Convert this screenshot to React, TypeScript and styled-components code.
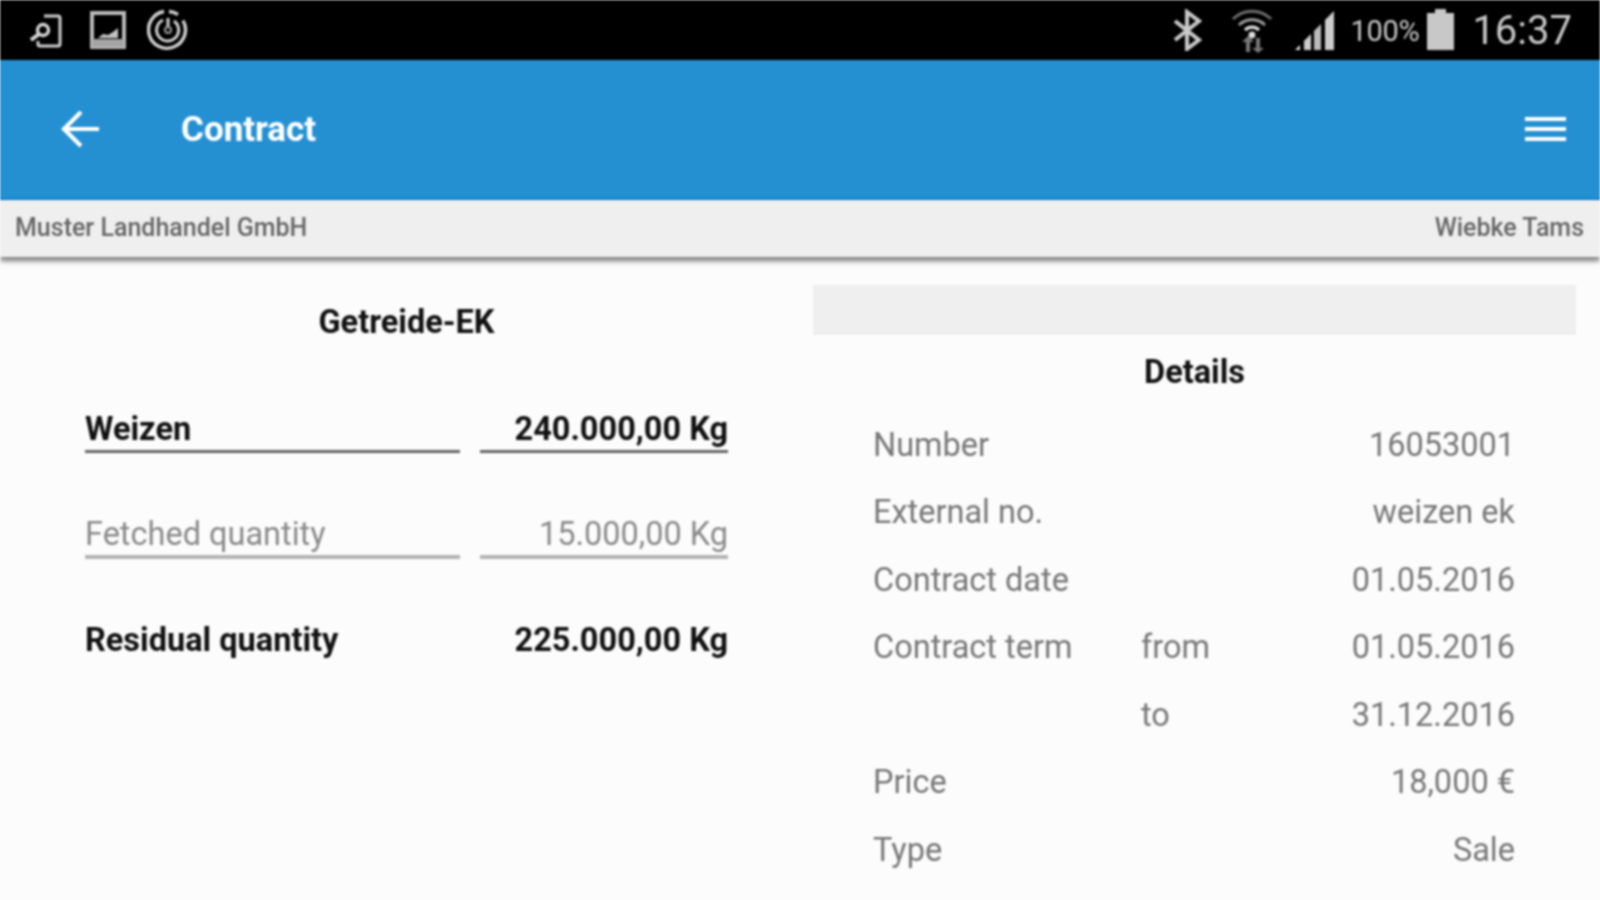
import React from "react";
import styled, { createGlobalStyle } from "styled-components";

const GlobalStyle = createGlobalStyle`
  html, body {
    margin: 0;
    padding: 0;
    background: #fcfcfc;
    overflow: hidden;
  }
  body {
    font-family: Roboto, "Liberation Sans", sans-serif;
  }
`;

const details = [
  { label: "Number", extra: "", value: "16053001" },
  { label: "External no.", extra: "", value: "weizen ek" },
  { label: "Contract date", extra: "", value: "01.05.2016" },
  { label: "Contract term", extra: "from", value: "01.05.2016" },
  { label: "", extra: "to", value: "31.12.2016" },
  { label: "Price", extra: "", value: "18,000 €" },
  { label: "Type", extra: "", value: "Sale" },
];

const App = () => {
  return (
    <Page>
      <GlobalStyle />
      <StatusBar>
        <StatusGroup>
          <StatusIcon $left={28} width="40" height="40" viewBox="0 0 40 40">
            <path d="M16 6h14a2 2 0 0 1 2 2v26a2 2 0 0 1-2 2H12a2 2 0 0 1-2-2v-3" fill="none" stroke="#cfcfcf" strokeWidth="3" />
            <circle cx="15" cy="20" r="5.5" fill="none" stroke="#d8d8d8" strokeWidth="3.4" />
            <path d="M11 24l-8 6" stroke="#d8d8d8" strokeWidth="4" />
          </StatusIcon>
          <StatusIcon $left={20} width="40" height="40" viewBox="0 0 40 40">
            <rect x="4" y="3" width="32" height="34" fill="none" stroke="#c0c0c0" strokeWidth="3.8" />
            <path d="M10 28l5-4 5 1 5-3 5-4v10z" fill="#c4c4c4" />
            <rect x="4" y="29" width="32" height="8" fill="#a4a4a4" />
          </StatusIcon>
          <StatusIcon $left={19} width="42" height="42" viewBox="0 0 42 42">
            <path d="M17 2.5a18.5 18.5 0 1 0 19 9" fill="none" stroke="#cfcfcf" strokeWidth="3.4" />
            <path d="M22 2.5a18.5 18.5 0 0 1 9 3" fill="none" stroke="#cfcfcf" strokeWidth="3.4" />
            <path d="M16 11a11 11 0 1 0 11 1" fill="none" stroke="#cfcfcf" strokeWidth="3" />
            <path d="M21 9v10" stroke="#cfcfcf" strokeWidth="3" />
            <circle cx="21" cy="21" r="3" fill="none" stroke="#999" strokeWidth="2" />
          </StatusIcon>
        </StatusGroup>
        <StatusGroup>
          <StatusIcon $left={0} width="32" height="42" viewBox="0 0 32 42">
            <path d="M4 12l24 19-12 9V3l12 9L4 31" fill="none" stroke="#c8c8c8" strokeWidth="4" />
          </StatusIcon>
          <StatusIcon $left={27} width="44" height="46" viewBox="0 0 44 46">
            <path d="M3 12a27 27 0 0 1 38 0" fill="none" stroke="#6c6c6c" strokeWidth="3" />
            <path d="M9 18a19 19 0 0 1 26 0" fill="none" stroke="#9a9a9a" strokeWidth="3" />
            <path d="M15 23a10 10 0 0 1 14 0" fill="none" stroke="#ddd" strokeWidth="3.4" />
            <circle cx="22" cy="28" r="3.4" fill="#ddd" />
            <path d="M16 45v-10h-4l6-6 6 6h-4v10zM26 31v10h-4l6 5 6-5h-4V31z" fill="#777" />
          </StatusIcon>
          <StatusIcon $left={20} width="42" height="44" viewBox="0 0 42 44">
            <path d="M1 42l5-5v5z" fill="#ddd" />
            <path d="M10 33l7-7v16h-7z" fill="#ccc" />
            <path d="M20 23l7-7v26h-7z" fill="#bbb" />
            <path d="M31 12l9-9v39h-9z" fill="#ccc" />
          </StatusIcon>
          <Percent>100%</Percent>
          <Battery />
          <Clock>16:37</Clock>
        </StatusGroup>
      </StatusBar>

      <AppBar>
        <TitleGroup>
          <svg width="40" height="38" viewBox="0 0 40 38">
            <path d="M39 19H4M21 2L4 19l17 17" fill="none" stroke="#fff" strokeWidth="4.2" />
          </svg>
          <Title>Contract</Title>
        </TitleGroup>
        <Burger>
          <span />
          <span />
          <span />
        </Burger>
      </AppBar>

      <SubHeader>
        <span>Muster Landhandel GmbH</span>
        <span>Wiebke Tams</span>
      </SubHeader>

      <Content>
        <LeftPanel>
          <PanelTitle>Getreide-EK</PanelTitle>
          <Quantities>
            <QuantityRow $muted={false} $lined>
              <QuantityCell>Weizen</QuantityCell>
              <QuantityCell $right>240.000,00 Kg</QuantityCell>
            </QuantityRow>
            <QuantityRow $muted $lined>
              <QuantityCell>Fetched quantity</QuantityCell>
              <QuantityCell $right>15.000,00 Kg</QuantityCell>
            </QuantityRow>
            <QuantityRow $muted={false} $lined={false}>
              <QuantityCell>Residual quantity</QuantityCell>
              <QuantityCell $right>225.000,00 Kg</QuantityCell>
            </QuantityRow>
          </Quantities>
        </LeftPanel>

        <RightPanel>
          <GreyBar />
          <DetailsTitle>Details</DetailsTitle>
          <DetailList>
            {details.map((d) => (
              <DetailRow key={d.value + d.extra + d.label}>
                <span>{d.label}</span>
                <span>{d.extra}</span>
                <DetailValue>{d.value}</DetailValue>
              </DetailRow>
            ))}
          </DetailList>
        </RightPanel>
      </Content>
    </Page>
  );
};

export default App;

const Page = styled.div`
  width: 1600px;
  height: 900px;
  display: flex;
  flex-direction: column;
  overflow: hidden;
  background: #fcfcfc;
  filter: blur(0.8px);
`;

const StatusBar = styled.div`
  height: 60px;
  flex-shrink: 0;
  background: #000;
  display: flex;
  justify-content: space-between;
  align-items: center;
  padding: 0 28px 0 0;
`;

const StatusGroup = styled.div`
  display: flex;
  align-items: center;
`;

const StatusIcon = styled.svg<{ $left: number }>`
  display: block;
  margin-left: ${({ $left }) => $left}px;
`;

const Percent = styled.span`
  margin: 2px 0 0 14px;
  font-size: 29px;
  letter-spacing: -0.3px;
  color: #c8c8c8;
`;

const Battery = styled.div`
  position: relative;
  width: 27px;
  height: 37px;
  margin: 3px 0 0 8px;
  background: #c8c8c8;
  &::before {
    content: "";
    position: absolute;
    top: -4px;
    left: 8px;
    width: 11px;
    height: 4px;
    background: #c8c8c8;
  }
`;

const Clock = styled.span`
  margin-left: 18px;
  font-size: 40px;
  font-weight: 400;
  color: #c8c8c8;
`;

const AppBar = styled.div`
  height: 140px;
  flex-shrink: 0;
  box-sizing: border-box;
  background: #2490d2;
  border-bottom: 2px solid #0a84d6;
  display: flex;
  justify-content: space-between;
  align-items: center;
  padding: 0 34px 0 60px;
`;

const TitleGroup = styled.div`
  display: flex;
  align-items: center;
`;

const Title = styled.div`
  margin-left: 81px;
  font-size: 35px;
  font-weight: 700;
  color: #fff;
`;

const Burger = styled.div`
  display: flex;
  flex-direction: column;
  gap: 6px;
  span {
    display: block;
    width: 41px;
    height: 4px;
    background: #fff;
  }
`;

const SubHeader = styled.div`
  height: 57px;
  flex-shrink: 0;
  box-sizing: border-box;
  background: #efefef;
  display: flex;
  justify-content: space-between;
  align-items: center;
  padding: 0 16px 2px 15px;
  font-size: 25px;
  font-weight: 500;
  color: #666;
  box-shadow: 0 4px 5px rgba(0, 0, 0, 0.5);
  position: relative;
`;

const Content = styled.div`
  flex: 1;
  display: flex;
`;

const LeftPanel = styled.div`
  width: 813px;
  box-sizing: border-box;
  padding: 0 85px;
`;

const PanelTitle = styled.div`
  margin-top: 43px;
  height: 44px;
  line-height: 44px;
  text-align: center;
  font-size: 32.5px;
  font-weight: 700;
  color: #111;
`;

const Quantities = styled.div`
  margin-top: 62px;
  display: flex;
  flex-direction: column;
  gap: 58px;
`;

const QuantityRow = styled.div<{ $muted: boolean; $lined: boolean }>`
  display: grid;
  grid-template-columns: 375px 248px;
  column-gap: 20px;
  font-size: ${({ $muted }) => ($muted ? "32.5px" : "32.5px")};
  font-weight: ${({ $muted }) => ($muted ? 400 : 700)};
  color: ${({ $muted }) => ($muted ? "#8a8a8a" : "#111")};
  & > div {
    border-bottom: ${({ $lined, $muted }) =>
      !$lined ? "3px solid transparent" : $muted ? "4px solid #b4b4b4" : "3px solid #666"};
  }
`;

const QuantityCell = styled.div<{ $right?: boolean }>`
  height: 44px;
  line-height: 46px;
  white-space: nowrap;
  text-align: ${({ $right }) => ($right ? "right" : "left")};
`;

const RightPanel = styled.div`
  flex: 1;
  padding: 28px 24px 0 0;
`;

const GreyBar = styled.div`
  height: 50px;
  background: #efefef;
`;

const DetailsTitle = styled.div`
  margin-top: 15px;
  height: 44px;
  line-height: 44px;
  text-align: center;
  font-size: 32.5px;
  font-weight: 700;
  color: #111;
`;

const DetailList = styled.div`
  margin-top: 17px;
  padding: 0 61px 0 60px;
  display: flex;
  flex-direction: column;
`;

const DetailRow = styled.div`
  height: 67.5px;
  display: grid;
  grid-template-columns: 268px 1fr auto;
  align-items: center;
  font-size: 32.5px;
  color: #777;
`;

const DetailValue = styled.span`
  text-align: right;
`;
